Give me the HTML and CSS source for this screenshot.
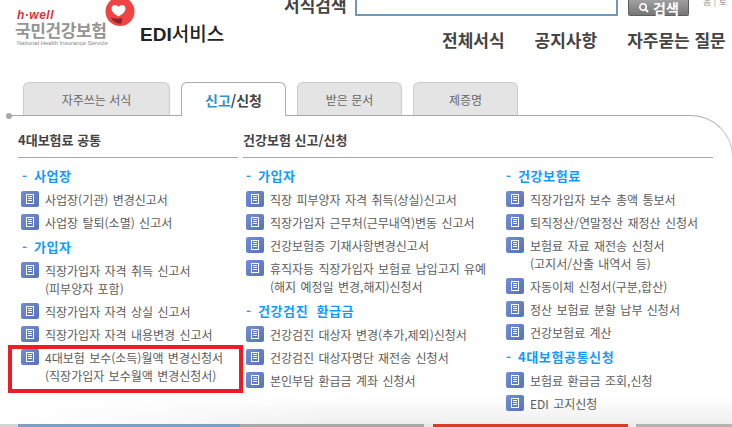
FILE: index.html
```html
<!DOCTYPE html>
<html lang="ko">
<head>
    <meta charset="UTF-8">
    <title>EDI서비스 - 국민건강보험</title>
    <link rel="stylesheet" href="styles.css">
</head>
<body>
    <svg class="sprite" width="0" height="0">
        <symbol id="doc" viewBox="0 0 18 16">
            <rect x="5" y="3" width="8" height="10" fill="#fff"/>
            <rect x="6" y="4" width="6" height="8" fill="#5f7cc0"/>
            <path d="M7 5.5h4M7 7.5h4M7 9.5h4" stroke="#fff" stroke-width="1"/>
        </symbol>
    </svg>

    <div class="header">
        <div class="brand">
            <div class="logo">
                <svg class="heart" width="32" height="30" viewBox="0 0 32 30">
                    <circle cx="15" cy="11.5" r="14.5" fill="#ee4444"/>
                    <path d="M13.5 16.5C9 14 6.5 11.5 6.5 8.500c0-2.500 2-3.500 3.500-3.500 1.500 0 2.800.8 3.500 2 .7-1.200 2-2 3.500-2 1.500 0 3.500 1 3.500 3.500 0 3-2.500 5.500-7 8z" fill="#fff"/>
                    <path d="M6 17.500c4 1.500 7 1.500 11 .5l-.5 5.500c-4 .5-8-1.500-10.500-6z" fill="#8e2224"/>
                </svg>
                <div class="hwell">h·well</div>
                <div class="nhis">국민건강보험</div>
                <div class="nhis-en">National Health Insurance Service</div>
            </div>
            <div class="edi"><b>EDI</b>서비스</div>
        </div>
        <div class="top">
            <div class="search">
                <span class="search-label">서식검색</span>
                <span class="search-input"></span>
                <span class="search-btn">
                    <svg width="11" height="11" viewBox="0 0 11 11"><circle cx="5" cy="5" r="3.2" fill="none" stroke="#fff" stroke-width="1.6"/><path d="M7.5 7.5l2.5 2.5" stroke="#fff" stroke-width="1.8"/></svg>
                    검색
                </span>
                <span class="util">홈 | 로</span>
            </div>
            <div class="nav">
                <a>전체서식</a>
                <a>공지사항</a>
                <a>자주묻는 질문</a>
            </div>
        </div>
    </div>

    <div class="tabs">
        <a class="tab tab-first">자주쓰는 서식</a>
        <a class="tab tab-on"><span class="blue">신고</span>/신청</a>
        <a class="tab">받은 문서</a>
        <a class="tab">제증명</a>
    </div>

    <div class="panel">
        <div class="col-a">
            <h3>4대보험료 공통</h3>
            <h4>사업장</h4>
            <ul>
                <li><svg class="ico"><use href="#doc"/></svg>사업장(기관) 변경신고서</li>
                <li><svg class="ico"><use href="#doc"/></svg>사업장 탈퇴(소멸) 신고서</li>
            </ul>
            <h4>가입자</h4>
            <ul>
                <li><svg class="ico"><use href="#doc"/></svg>직장가입자 자격 취득 신고서<br>(피부양자 포함)</li>
                <li><svg class="ico"><use href="#doc"/></svg>직장가입자 자격 상실 신고서</li>
                <li><svg class="ico"><use href="#doc"/></svg>직장가입자 자격 내용변경 신고서</li>
                <li class="marked"><svg class="ico"><use href="#doc"/></svg>4대보험 보수(소득)월액 변경신청서<br>(직장가입자 보수월액 변경신청서)</li>
            </ul>
        </div>
        <div class="col-b">
            <h3>건강보험 신고/신청</h3>
            <div class="col-b-inner">
                <div>
                    <h4>가입자</h4>
                    <ul>
                        <li><svg class="ico"><use href="#doc"/></svg>직장 피부양자 자격 취득(상실)신고서</li>
                        <li><svg class="ico"><use href="#doc"/></svg>직장가입자 근무처(근무내역)변동 신고서</li>
                        <li><svg class="ico"><use href="#doc"/></svg>건강보험증 기재사항변경신고서</li>
                        <li><svg class="ico"><use href="#doc"/></svg>휴직자등 직장가입자 보험료 납입고지 유예<br>(해지 예정일 변경,해지)신청서</li>
                    </ul>
                    <h4>건강검진 환급금</h4>
                    <ul>
                        <li><svg class="ico"><use href="#doc"/></svg>건강검진 대상자 변경(추가,제외)신청서</li>
                        <li><svg class="ico"><use href="#doc"/></svg>건강검진 대상자명단 재전송 신청서</li>
                        <li><svg class="ico"><use href="#doc"/></svg>본인부담 환급금 계좌 신청서</li>
                    </ul>
                </div>
                <div>
                    <h4>건강보험료</h4>
                    <ul>
                        <li><svg class="ico"><use href="#doc"/></svg>직장가입자 보수 총액 통보서</li>
                        <li><svg class="ico"><use href="#doc"/></svg>퇴직정산/연말정산 재정산 신청서</li>
                        <li><svg class="ico"><use href="#doc"/></svg>보험료 자료 재전송 신청서<br>(고지서/산출 내역서 등)</li>
                        <li><svg class="ico"><use href="#doc"/></svg>자동이체 신청서(구분,합산)</li>
                        <li><svg class="ico"><use href="#doc"/></svg>정산 보험료 분할 납부 신청서</li>
                        <li><svg class="ico"><use href="#doc"/></svg>건강보험료 계산</li>
                    </ul>
                    <h4>4대보험공통신청</h4>
                    <ul>
                        <li><svg class="ico"><use href="#doc"/></svg>보험료 환급금 조회,신청</li>
                        <li><svg class="ico"><use href="#doc"/></svg>EDI 고지신청</li>
                    </ul>
                </div>
            </div>
        </div>
    </div>

    <div class="footer-strip"></div>
</body>
</html>
```

FILE: styles.css
```css
* {
    box-sizing: border-box;
    margin: 0;
    padding: 0;
}

html, body {
    height: 427px;
    overflow: hidden;
}

body {
    font-family: "Noto Sans CJK KR", "Noto Sans", sans-serif;
    background: #fff;
    color: #555;
    font-size: 12px;
    display: flex;
    flex-direction: column;
}

.sprite {
    display: block;
}

/* header */
.header {
    display: flex;
    height: 82px;
    overflow: hidden;
    flex-shrink: 0;
}

.brand {
    display: flex;
    width: 284px;
    padding-left: 15px;
}

.logo {
    position: relative;
    width: 125px;
    padding-top: 11px;
}

.heart {
    position: absolute;
    left: 90px;
    top: 0;
}

.hwell {
    font-family: "Liberation Sans", sans-serif;
    font-weight: bold;
    font-style: italic;
    font-size: 12px;
    line-height: 9px;
    letter-spacing: 0.5px;
    color: #d8313a;
    padding-left: 2px;
}

.nhis {
    font-size: 17px;
    line-height: 19px;
    font-weight: 700;
    color: #949490;
    letter-spacing: -0.4px;
}

.nhis-en {
    font-family: "Liberation Sans", sans-serif;
    font-size: 6px;
    line-height: 8px;
    color: #888;
    padding-left: 2px;
    white-space: nowrap;
}

.edi {
    font-size: 19px;
    line-height: 24px;
    color: #222;
    font-weight: 500;
    padding-top: 21px;
    white-space: nowrap;
}

.edi b {
    font-family: "Liberation Sans", sans-serif;
    font-weight: bold;
}

.top {
    flex: 1;
}

.search {
    display: flex;
    align-items: flex-start;
    height: 16px;
}

.search-label {
    font-size: 17px;
    line-height: 20px;
    font-weight: 700;
    color: #444;
    margin-top: -5px;
    width: 71px;
}

.search-input {
    width: 263px;
    height: 16px;
    background: #fff;
    border: 2px solid #7098bb;
    border-top: 0;
}

.search-btn {
    display: flex;
    align-items: center;
    justify-content: center;
    gap: 4px;
    width: 61px;
    height: 16px;
    margin-left: 10px;
    background: linear-gradient(#a0a0a0, #767676);
    border: 1px solid #5f5f5f;
    border-top: 0;
    border-radius: 0 0 2px 2px;
    color: #fff;
    font-weight: 700;
    font-size: 14px;
    line-height: 14px;
}

.util {
    font-size: 9px;
    line-height: 10px;
    color: #999;
    margin: -3px 0 0 14px;
    white-space: nowrap;
}

.nav {
    display: flex;
    padding: 13px 0 0 158px;
    gap: 30px;
    font-size: 17px;
    line-height: 22px;
    font-weight: 700;
    color: #444;
    white-space: nowrap;
}

/* tabs */
.tabs {
    display: flex;
    height: 33px;
    padding-left: 23px;
    gap: 11px;
    flex-shrink: 0;
}

.tab {
    width: 105px;
    height: 33px;
    display: flex;
    align-items: center;
    justify-content: center;
    background: #e4e4e4;
    border: 1px solid #ccc;
    border-bottom: 0;
    border-radius: 6px 6px 0 0;
    font-size: 12px;
    color: #666;
}

.tab-first {
    width: 147px;
}

.tab-on {
    position: relative;
    z-index: 1;
    height: 34px;
    background: #fff;
    border-color: #aaa;
    font-size: 14px;
    font-weight: 700;
    color: #444;
}

.blue {
    color: #2f93cc;
}

/* panel */
.panel {
    position: relative;
    display: flex;
    flex: 1;
    gap: 5px;
    margin-left: 8px;
    margin-right: -1px;
    padding: 15px 0 0 10px;
    border-top: 1px solid #a8a8a8;
    border-right: 1px solid #c4c8cc;
    border-top-right-radius: 42px;
    background:
        linear-gradient(to right, #fff, rgba(255, 255, 255, 0) 45%),
        linear-gradient(#fff 280px, #efefef);
}

.panel::before {
    content: "";
    position: absolute;
    left: -2px;
    top: -3px;
    width: 6px;
    height: 6px;
    border-radius: 50%;
    background: #a8a8a8;
}

.col-a {
    width: 220px;
}

.col-b {
    width: 470px;
}

.col-b-inner {
    display: flex;
}

.col-b-inner > div:first-child {
    width: 260px;
}

.col-b-inner ul {
    margin-bottom: 1px;
}

h3 {
    height: 27px;
    font-size: 13px;
    line-height: 18px;
    font-weight: 700;
    color: #444;
    border-bottom: 1px solid #a8a8a8;
    margin-bottom: 8px;
}

h4 {
    font-size: 13px;
    line-height: 19px;
    font-weight: 700;
    color: #0f9bff;
    padding-left: 4px;
    margin-bottom: 6px;
    letter-spacing: 0.6px;
    word-spacing: 4px;
}

h4::before {
    content: "- ";
    display: inline-block;
    width: 12px;
}

.col-b-inner h4 {
    padding-left: 3px;
}

ul {
    list-style: none;
    margin-bottom: 2px;
}

li {
    position: relative;
    padding-left: 27px;
    font-size: 12px;
    line-height: 18px;
    margin-bottom: 5px;
    white-space: nowrap;
    color: #5c5c5c;
    word-spacing: 1px;
}

.ico {
    position: absolute;
    left: 3px;
    top: 0;
    width: 18px;
    height: 16px;
    border-radius: 2px;
    background: linear-gradient(135deg, #6f8fd8, #5a72b4);
}

.marked::after {
    content: "";
    position: absolute;
    left: -10px;
    right: -5px;
    top: -4px;
    bottom: -8px;
    border: 4px solid #ed1c24;
}

/* bottom strip */
.footer-strip {
    height: 3px;
    flex-shrink: 0;
    background: linear-gradient(to right,
        #d4d4d4 18px,
        #7f9fc0 18px, #7f9fc0 240px,
        #a8a8a8 240px, #a8a8a8 424px,
        #e8e8e8 424px, #e8e8e8 433px,
        #d83c26 433px, #d83c26 628px,
        #eee 628px, #eee 636px,
        #b3b3b3 636px);
}
```
